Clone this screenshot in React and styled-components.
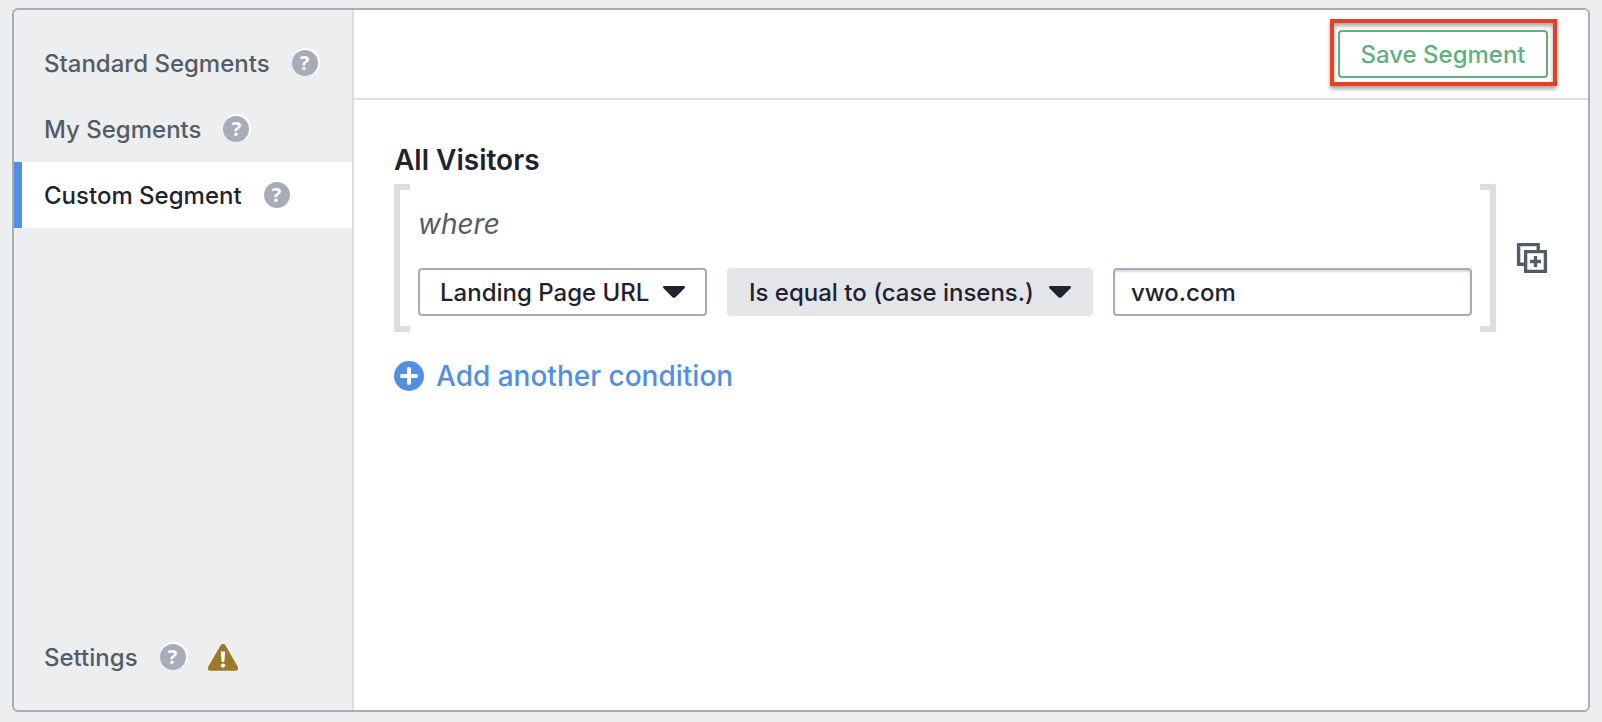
import React, { useState } from "react";
import styled, { createGlobalStyle } from "styled-components";

const colors = {
  page: "#edeef0",
  frame: "#a6adb9",
  line: "#dadee3",
  blue: "#528fe0",
  dark: "#1f2330",
  gray: "#535d66",
  green: "#61b07d",
  red: "#e94025",
  warning: "#9b7a28",
};

const navLinks = [
  { id: "standard", name: "Standard Segments" },
  { id: "my", name: "My Segments" },
  { id: "custom", name: "Custom Segment" },
];

function HelpButton({ topic }) {
  return (
    <Help type="button" aria-label={`Help: ${topic}`}>
      ?
    </Help>
  );
}

function WarningIcon() {
  return (
    <svg width="30" height="28" viewBox="0 0 30 28" aria-hidden="true">
      <path
        d="M12.6 2.3a2.8 2.8 0 0 1 4.8 0l12.2 21.2a2.6 2.6 0 0 1-2.3 4.3H2.7a2.6 2.6 0 0 1-2.3-4.3z"
        fill={colors.warning}
      />
      <path d="M12.8 8.4h4.4l-.9 10.6h-2.6z" fill="#fff" />
      <circle cx="15" cy="22.6" r="2.1" fill="#fff" />
    </svg>
  );
}

function CaretIcon() {
  return (
    <svg width="22" height="12" viewBox="0 0 22 12" aria-hidden="true">
      <path
        d="M1.4 0h19.2c1.3 0 1.8 1.3.9 2.2l-8.7 8.9c-1 1.1-2.6 1.1-3.6 0L.5 2.2C-.4 1.3.1 0 1.4 0z"
        fill={colors.dark}
      />
    </svg>
  );
}

function DuplicateIcon() {
  return (
    <svg width="32" height="32" viewBox="0 0 32 32" aria-hidden="true">
      <g fill="none" stroke={colors.gray} strokeWidth="3.4">
        <path d="M8 22.2H2.6V2.6h19.6V8" />
        <path d="M9.6 9.6h19.8v19.8H9.6z" />
        <path d="M19.5 14v11M14 19.5h11" />
      </g>
    </svg>
  );
}

function PlusIcon() {
  return (
    <svg width="30" height="30" viewBox="0 0 30 30" aria-hidden="true">
      <circle cx="15" cy="15" r="15" fill={colors.blue} />
      <path
        d="M15 8v14M8 15h14"
        stroke="#fff"
        strokeWidth="4"
        strokeLinecap="round"
      />
    </svg>
  );
}

function Dropdown({ label, options, width, filled }) {
  return (
    <SelectWrap $width={width}>
      <Select aria-label={label} $filled={filled}>
        {options.map((option) => (
          <option key={option}>{option}</option>
        ))}
      </Select>
      <CaretIcon />
    </SelectWrap>
  );
}

export default function App() {
  const [active, setActive] = useState("custom");
  const [value, setValue] = useState("vwo.com");

  return (
    <>
      <GlobalStyle />
      <Frame>
        <Sidebar>
          {navLinks.map((item) => (
            <NavRow key={item.id} $active={item.id === active}>
              <a href={`#${item.id}`} onClick={() => setActive(item.id)}>
                {item.name}
              </a>
              <HelpButton topic={item.name} />
            </NavRow>
          ))}
          <SettingsRow>
            <a href="#settings">Settings</a>
            <HelpButton topic="Settings" />
            <WarningIcon />
          </SettingsRow>
        </Sidebar>
        <Main>
          <Header>
            <Highlight>
              <SaveButton type="button">Save Segment</SaveButton>
            </Highlight>
          </Header>
          <Content>
            <Title>All Visitors</Title>
            <GroupRow>
              <Group>
                <Where>where</Where>
                <Fields>
                  <Dropdown
                    label="Attribute"
                    options={["Landing Page URL"]}
                    width="289px"
                  />
                  <Dropdown
                    label="Operator"
                    options={["Is equal to (case insens.)"]}
                    width="366px"
                    filled
                  />
                  <ValueInput
                    type="text"
                    aria-label="Value"
                    value={value}
                    onChange={(e) => setValue(e.target.value)}
                  />
                </Fields>
              </Group>
              <IconButton type="button" aria-label="Duplicate group">
                <DuplicateIcon />
              </IconButton>
            </GroupRow>
            <AddButton type="button">
              <PlusIcon />
              Add another condition
            </AddButton>
          </Content>
        </Main>
      </Frame>
    </>
  );
}

const GlobalStyle = createGlobalStyle`
  *, *::before, *::after {
    box-sizing: border-box;
  }

  body {
    margin: 0;
    background: ${colors.page};
    color: ${colors.dark};
    font-family: Inter, "Liberation Sans", sans-serif;
    font-size: 24px;
    font-weight: 550;
  }

  button, input, select {
    font: inherit;
    color: inherit;
    margin: 0;
  }

  button {
    cursor: pointer;
  }

  svg {
    display: block;
    flex-shrink: 0;
  }
`;

const Frame = styled.div`
  display: flex;
  min-height: calc(100vh - 18px);
  margin: 8px 12px 10px;
  border: 2px solid ${colors.frame};
  border-radius: 6px;
  overflow: hidden;
`;

const Sidebar = styled.nav`
  display: flex;
  flex-direction: column;
  flex: 0 0 340px;
  padding: 20px 0;
  border-right: 2px solid ${colors.line};
`;

const NavRow = styled.div`
  display: flex;
  align-items: center;
  gap: 22px;
  height: 66px;
  padding-left: 22px;
  border-left: 8px solid ${(props) => (props.$active ? colors.blue : "transparent")};
  background: ${(props) => (props.$active ? "#fff" : "transparent")};

  a {
    color: ${(props) => (props.$active ? colors.dark : colors.gray)};
    text-decoration: none;
    white-space: nowrap;
  }
`;

const SettingsRow = styled(NavRow)`
  margin-top: auto;
`;

const Help = styled.button`
  width: 26px;
  height: 26px;
  padding: 0;
  border: none;
  border-radius: 50%;
  background: ${colors.frame};
  box-shadow: 1px -1px 0 1px #fff;
  color: #fff;
  font-family: "Open Sans", sans-serif;
  font-size: 20px;
  font-weight: 700;
  line-height: 26px;
`;

const Main = styled.main`
  flex: 1;
  min-width: 0;
  background: #fff;
`;

const Header = styled.header`
  display: flex;
  justify-content: flex-end;
  padding: 20px 40px;
  border-bottom: 2px solid ${colors.line};
`;

const Highlight = styled.div`
  position: relative;

  &::after {
    content: "";
    position: absolute;
    inset: -11px -9px -8px -8px;
    border: 4px solid ${colors.red};
    box-shadow: 0 3px 4px rgba(0, 0, 0, 0.35), inset 0 3px 4px rgba(0, 0, 0, 0.35);
    pointer-events: none;
  }
`;

const SaveButton = styled.button`
  display: block;
  min-width: 210px;
  height: 48px;
  padding: 0 20px;
  border: 2px solid ${colors.green};
  border-radius: 4px;
  background: #fff;
  color: ${colors.green};
  white-space: nowrap;
`;

const Content = styled.div`
  padding: 40px;
`;

const Title = styled.h1`
  margin: 0 0 4px;
  font-size: 28px;
  font-weight: 600;
  line-height: 40px;
`;

const GroupRow = styled.div`
  display: flex;
  align-items: center;
  gap: 20px;
`;

const Group = styled.section`
  position: relative;
  flex: 1;
  min-width: 0;
  padding: 20px 24px 16px;

  /* square brackets around the conditions */
  &::before,
  &::after {
    content: "";
    position: absolute;
    top: 0;
    bottom: 0;
    width: 16px;
    border: 6px solid ${colors.line};
  }

  &::before {
    left: 0;
    border-right: none;
  }

  &::after {
    right: 0;
    border-left: none;
  }
`;

const Where = styled.p`
  margin: 0 0 24px;
  color: ${colors.gray};
  font-size: 28px;
  font-style: italic;
  font-weight: 400;
  line-height: 40px;
`;

const Fields = styled.div`
  display: flex;
  gap: 20px;
`;

const SelectWrap = styled.div`
  position: relative;
  flex: 0 0 ${(props) => props.$width};

  svg {
    position: absolute;
    top: 18px;
    right: 22px;
    pointer-events: none;
  }
`;

const Select = styled.select`
  appearance: none;
  width: 100%;
  height: 48px;
  padding: 0 44px 0 20px;
  border: 2px solid ${(props) => (props.$filled ? "#e4e5e9" : colors.frame)};
  border-radius: 4px;
  background: ${(props) => (props.$filled ? "#e4e5e9" : "#fff")};
`;

const ValueInput = styled.input`
  flex: 1;
  min-width: 0;
  height: 48px;
  padding: 0 16px;
  border: 2px solid ${colors.frame};
  border-radius: 4px;
  background: #fff;
  box-shadow: inset 0 2px 2px rgba(0, 0, 0, 0.15);
`;

const IconButton = styled.button`
  padding: 0;
  border: none;
  background: none;
`;

const AddButton = styled.button`
  display: flex;
  align-items: center;
  gap: 12px;
  margin-top: 24px;
  padding: 0;
  border: none;
  background: none;
  color: ${colors.blue};
  font-size: 28px;
  font-weight: 500;
  line-height: 40px;
`;
